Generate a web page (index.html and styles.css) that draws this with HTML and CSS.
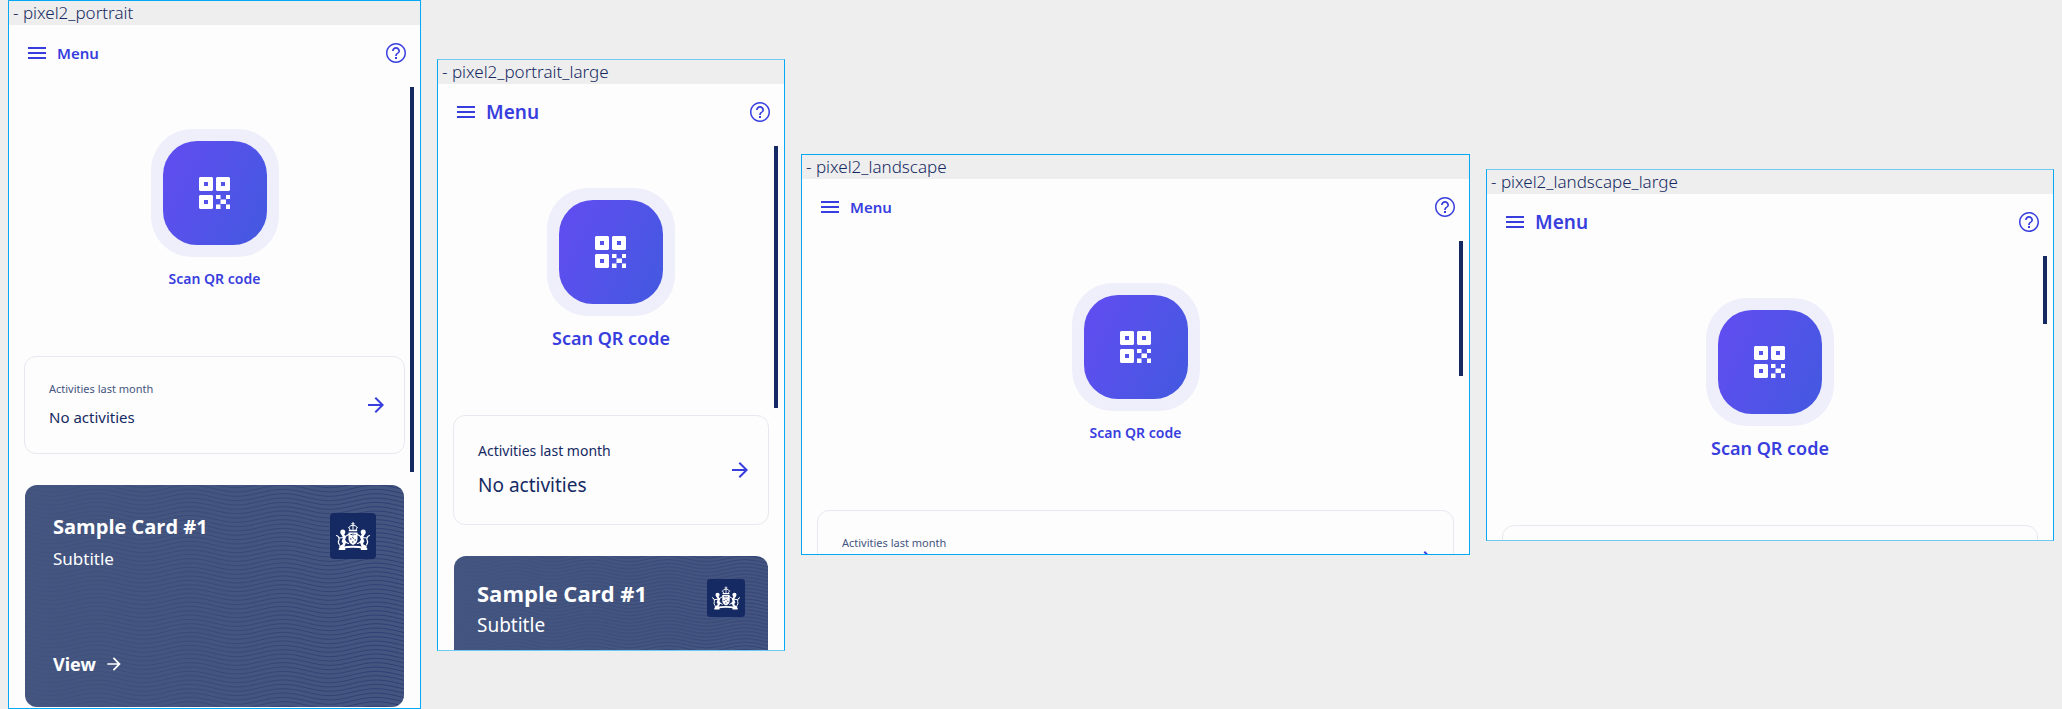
FILE: index.html
```html
<!DOCTYPE html>
<html lang="en">
<head>
<meta charset="utf-8">
<title>Dashboard screens</title>
<link rel="stylesheet" href="styles.css">
</head>
<body>
<svg class="sprite" aria-hidden="true">
  <defs>
    <linearGradient id="fade" x1="0" x2="1" y1="0" y2="0">
      <stop offset="0" stop-color="#fff" stop-opacity=".08"/>
      <stop offset=".5" stop-color="#fff" stop-opacity=".5"/>
      <stop offset="1" stop-color="#fff"/>
    </linearGradient>
    <mask id="fade-mask"><rect width="379" height="222" fill="url(#fade)"/></mask>
    <pattern id="waves" x="72" y="0" width="93" height="13" patternUnits="userSpaceOnUse">
      <g fill="none" stroke="#2f3e72" stroke-width="1">
        <path d="M0-8.67C17-8.67 30-1.67 46.5-1.67S76-8.67 93-8.67"/>
        <path d="M0-4.33C17-4.33 30 2.67 46.5 2.67S76-4.33 93-4.33"/>
        <path d="M0 0C17 0 30 7 46.5 7S76 0 93 0"/>
        <path d="M0 4.33C17 4.33 30 11.33 46.5 11.33S76 4.33 93 4.33"/>
        <path d="M0 8.67C17 8.67 30 15.67 46.5 15.67S76 8.67 93 8.67"/>
        <path d="M0 13C17 13 30 20 46.5 20S76 13 93 13"/>
      </g>
    </pattern>
  </defs>
  <symbol id="i-menu" viewBox="0 0 24 24"><path d="M3 18h18v-2H3v2zm0-5h18v-2H3v2zm0-7v2h18V6H3z"/></symbol>
  <symbol id="i-help" viewBox="0 0 24 24"><path d="M11 18h2v-2h-2v2zm1-16C6.48 2 2 6.48 2 12s4.480 10 10 10 10-4.480 10-10S17.520 2 12 2zm0 18.500c-4.690 0-8.500-3.810-8.500-8.500S7.310 3.500 12 3.500s8.500 3.810 8.500 8.500-3.810 8.500-8.500 8.500zM12 6c-2.210 0-4 1.790-4 4h1.700c0-1.270 1.030-2.300 2.300-2.300s2.300 1.030 2.300 2.300c0 2-3.150 1.850-3.150 5h1.700c0-2.250 3.150-2.500 3.150-5 0-2.210-1.790-4-4-4z"/></symbol>
  <symbol id="i-arrow" viewBox="0 0 24 24"><path d="M12 4l-1.410 1.410L16.170 11H4v2h12.170l-5.580 5.590L12 20l8-8z"/></symbol>
  <symbol id="i-qr" viewBox="0 0 32 32">
    <path fill-rule="evenodd" d="M1 0h12l1 1v12l-1 1H1l-1-1V1zM5 5v4h4V5zM18 0h12l1 1v12l-1 1H18l-1-1V1zM22 5v4h4V5zM1 18h12l1 1v12l-1 1H1l-1-1V19zM5 23v4h4v-4z"/>
    <path d="M17 18h4.500v4H17zM27 18h4v4h-4zM21.500 22.500H27V27h-5.500zM17 27.500h4.500V32H17zM27 27.500h4V32h-4z"/>
  </symbol>
  <symbol id="i-waves" viewBox="0 0 379 222" preserveAspectRatio="xMidYMid slice">
    <rect width="379" height="222" fill="url(#waves)" mask="url(#fade-mask)"/>
  </symbol>
  <symbol id="i-arms" viewBox="0 0 46 46">
    <rect width="46" height="46" rx="4" fill="#152a62"/>
    <g fill="none" stroke="#fff" stroke-linecap="round">
      <path stroke-width="1" d="M23 9.500v2.500M21.800 10.800h2.400M18.800 14.500q1-2.300 4.200-2.300t4.200 2.300M20 16.800l-1.200-2.300M26 16.800l1.200-2.300M23 12.500v4"/>
      <path stroke-width="1.500" d="M19.500 17.600h7"/>
      <path stroke-width="2.600" d="M12 20l2.500 4.500-1.500 4M34 20l-2.500 4.500 1.500 4M10.500 34l3-1.500 1.500-4M35.500 34l-3-1.500-1.500-4"/>
      <path stroke-width="1.200" d="M14.500 24l4-2.500M31.500 24l-4-2.500M9.500 25l4-.5M36.500 25l-4-.5M9.500 32q-2-3-.5-5 .5-3.500-2.500-4.500M36.500 32q2-3 .5-5-.5-3.500 2.500-4.500M15 29l3.500 1.500M31 29l-3.500 1.500"/>
      <path stroke-width="2" d="M11 35q12-2.600 24 0"/>
      <path stroke-width="1.800" d="M9.500 36h5M31.500 36h5"/>
    </g>
    <g fill="#fff">
      <circle cx="12.800" cy="19" r="2.500"/><circle cx="33.200" cy="19" r="2.500"/>
      <path d="M18.500 19.500h9v7q-.5 4-4.500 5.500-4-1.500-4.500-5.500z"/>
    </g>
    <path d="M20.500 21.500h1.500M24.500 21.500h1M20 26h1.500M24.500 27h1.500M23 20.500v2M22.200 24l1.600 1.600M22 29h1.500" stroke="#152a62" fill="none"/>
  </symbol>
</svg>

<main class="board">
  <section class="screen screen-portrait">
    <h2 class="screen-name">- pixel2_portrait</h2>
    <div class="app">
      <header class="bar">
        <button class="menu" type="button"><svg class="icon"><use href="#i-menu"/></svg>Menu</button>
        <button class="help" type="button" aria-label="Help"><svg class="icon"><use href="#i-help"/></svg></button>
      </header>
      <div class="content">
        <button class="scan" type="button">
          <span class="halo"><span class="tile"><svg class="qr"><use href="#i-qr"/></svg></span></span>
          <span class="scan-label">Scan QR code</span>
        </button>
        <a class="activity" href="#activity">
          <span class="activity-text"><span class="activity-when">Activities last month</span><span class="activity-what">No activities</span></span>
          <svg class="icon"><use href="#i-arrow"/></svg>
        </a>
        <article class="wallet">
          <svg class="waves"><use href="#i-waves"/></svg>
          <div class="wallet-head">
            <div class="wallet-text"><h3 class="wallet-title">Sample Card #1</h3><p class="wallet-sub">Subtitle</p></div>
            <svg class="arms"><use href="#i-arms"/></svg>
          </div>
          <a class="view" href="#card">View<svg class="view-icon"><use href="#i-arrow"/></svg></a>
        </article>
        <div class="scrollbar"></div>
      </div>
    </div>
  </section>

  <section class="screen screen-portrait-large large">
    <h2 class="screen-name">- pixel2_portrait_large</h2>
    <div class="app">
      <header class="bar">
        <button class="menu" type="button"><svg class="icon"><use href="#i-menu"/></svg>Menu</button>
        <button class="help" type="button" aria-label="Help"><svg class="icon"><use href="#i-help"/></svg></button>
      </header>
      <div class="content">
        <button class="scan" type="button">
          <span class="halo"><span class="tile"><svg class="qr"><use href="#i-qr"/></svg></span></span>
          <span class="scan-label">Scan QR code</span>
        </button>
        <a class="activity" href="#activity">
          <span class="activity-text"><span class="activity-when">Activities last month</span><span class="activity-what">No activities</span></span>
          <svg class="icon"><use href="#i-arrow"/></svg>
        </a>
        <article class="wallet">
          <svg class="waves"><use href="#i-waves"/></svg>
          <div class="wallet-head">
            <div class="wallet-text"><h3 class="wallet-title">Sample Card #1</h3><p class="wallet-sub">Subtitle</p></div>
            <svg class="arms"><use href="#i-arms"/></svg>
          </div>
        </article>
        <div class="scrollbar"></div>
      </div>
    </div>
  </section>

  <section class="screen screen-landscape">
    <h2 class="screen-name">- pixel2_landscape</h2>
    <div class="app">
      <header class="bar">
        <button class="menu" type="button"><svg class="icon"><use href="#i-menu"/></svg>Menu</button>
        <button class="help" type="button" aria-label="Help"><svg class="icon"><use href="#i-help"/></svg></button>
      </header>
      <div class="content">
        <button class="scan" type="button">
          <span class="halo"><span class="tile"><svg class="qr"><use href="#i-qr"/></svg></span></span>
          <span class="scan-label">Scan QR code</span>
        </button>
        <a class="activity" href="#activity">
          <span class="activity-text"><span class="activity-when">Activities last month</span></span>
          <svg class="icon"><use href="#i-arrow"/></svg>
        </a>
        <div class="scrollbar"></div>
      </div>
    </div>
  </section>

  <section class="screen screen-landscape-large large">
    <h2 class="screen-name">- pixel2_landscape_large</h2>
    <div class="app">
      <header class="bar">
        <button class="menu" type="button"><svg class="icon"><use href="#i-menu"/></svg>Menu</button>
        <button class="help" type="button" aria-label="Help"><svg class="icon"><use href="#i-help"/></svg></button>
      </header>
      <div class="content">
        <button class="scan" type="button">
          <span class="halo"><span class="tile"><svg class="qr"><use href="#i-qr"/></svg></span></span>
          <span class="scan-label">Scan QR code</span>
        </button>
        <div class="activity"></div>
        <div class="scrollbar"></div>
      </div>
    </div>
  </section>
</main>
</body>
</html>
```
FILE: styles.css
```css
* {
  box-sizing: border-box;
}

body {
  margin: 0;
  background: #eee;
  color: #152a62;
  font-family: "Noto Sans", "Open Sans", sans-serif;
  font-size: 14px;
}

button {
  padding: 0;
  border: 0;
  background: none;
  color: inherit;
  font: inherit;
}

a {
  color: inherit;
  text-decoration: none;
}

h2,
h3,
p {
  margin: 0;
}

svg {
  display: block;
  flex: none;
  fill: currentColor;
}

.sprite {
  position: absolute;
  width: 0;
  height: 0;
}

.board {
  display: grid;
  grid-template-columns: 413fr 348fr 669fr 568fr;
  align-items: center;
  gap: 16px;
  padding: 0 8px;
}

.screen {
  display: flex;
  flex-direction: column;
  min-width: 0;
  min-height: 0;
  overflow: hidden;
  border: 1px solid #03a9f4;
}

.screen-portrait {
  aspect-ratio: 413 / 709;
}

.screen-portrait-large {
  aspect-ratio: 348 / 592;
}

.screen-landscape {
  aspect-ratio: 669 / 401;
}

.screen-landscape-large {
  aspect-ratio: 568 / 372;
}

.large {
  border-top-color: #6dcaf2;
  border-bottom-color: #6dcaf2;
}

.screen-name {
  flex: none;
  padding-left: 4px;
  font-size: 17px;
  font-weight: 300;
  line-height: 24px;
}

.app {
  display: flex;
  flex: 1;
  flex-direction: column;
  min-height: 0;
  background: #fdfdfd;
}

.bar {
  display: flex;
  flex: none;
  align-items: center;
  justify-content: space-between;
  height: 56px;
  padding: 0 12px 0 16px;
  color: #383ede;
}

.menu {
  display: flex;
  align-items: center;
  gap: 8px;
  font-size: 15px;
  font-weight: 600;
  line-height: 20px;
}

.icon {
  width: 24px;
  height: 24px;
}

.content {
  position: relative;
  flex: 1;
  min-height: 0;
  margin-top: 6px;
  padding: 0 15px;
}

.scan {
  display: flex;
  flex-direction: column;
  align-items: center;
  gap: 10px;
  width: 100%;
  padding: 42px 0 65px;
  color: #383ede;
  font-weight: 600;
  line-height: 24px;
}

.halo {
  padding: 12px;
  border-radius: 41px;
  background: #efeefb;
}

.tile {
  display: grid;
  place-items: center;
  width: 104px;
  height: 104px;
  border-radius: 34px;
  background: linear-gradient(115deg, #5e4eef 15%, #4558e1 92%);
  color: #fff;
}

.qr {
  width: 32px;
  height: 32px;
}

.activity {
  display: flex;
  align-items: center;
  justify-content: space-between;
  min-height: 98px;
  padding: 23px 16px 23px 24px;
  border: 1px solid #e8e8f0;
  border-radius: 12px;
}

.activity .icon {
  color: #383ede;
}

.activity-text {
  display: flex;
  flex-direction: column;
  align-self: flex-start;
  gap: 10px;
}

.activity-when {
  color: #445580;
  font-size: 11px;
  line-height: 18px;
}

.activity-what {
  font-size: 15px;
  line-height: 18px;
}

.wallet {
  position: relative;
  display: flex;
  flex-direction: column;
  justify-content: space-between;
  aspect-ratio: 379 / 222;
  margin: 31px 1px 0;
  padding: 28px;
  overflow: hidden;
  border-radius: 12px;
  background: #445580;
  color: #fff;
}

.waves {
  position: absolute;
  inset: 0;
  width: 100%;
  height: 100%;
}

.wallet-head {
  position: relative;
  display: flex;
  justify-content: space-between;
}

.wallet-title {
  font-family: "Open Sans", "Noto Sans", sans-serif;
  font-size: 20px;
  font-weight: 700;
  line-height: 28px;
}

.wallet-sub {
  margin-top: 6px;
  font-size: 17px;
  line-height: 24px;
}

.arms {
  width: 46px;
  height: 46px;
}

.view {
  position: relative;
  display: flex;
  align-items: center;
  align-self: flex-start;
  gap: 8px;
  font-size: 18px;
  font-weight: 700;
  line-height: 30px;
}

.view-icon {
  width: 20px;
  height: 20px;
}

.large .scan {
  font-size: 18px;
}

.large .menu,
.large .activity-what,
.large .wallet-sub {
  font-size: 19px;
}

.large .activity {
  min-height: 110px;
}

.large .activity-when {
  color: inherit;
  font-size: 14px;
}

.large .activity-when,
.large .activity-what {
  line-height: 24px;
}

.large .wallet {
  padding: 23px;
}

.large .wallet-title {
  font-size: 22px;
}

.large .arms {
  width: 38px;
  height: 38px;
}

.scrollbar {
  position: absolute;
  top: 0;
  right: 6px;
  width: 4px;
  background: #152a62;
}

.screen-portrait .scrollbar {
  height: 62%;
}

.screen-portrait-large .scrollbar {
  height: 52%;
}

.screen-landscape .scrollbar {
  height: 43%;
}

.screen-landscape-large .scrollbar {
  height: 24%;
}
```
